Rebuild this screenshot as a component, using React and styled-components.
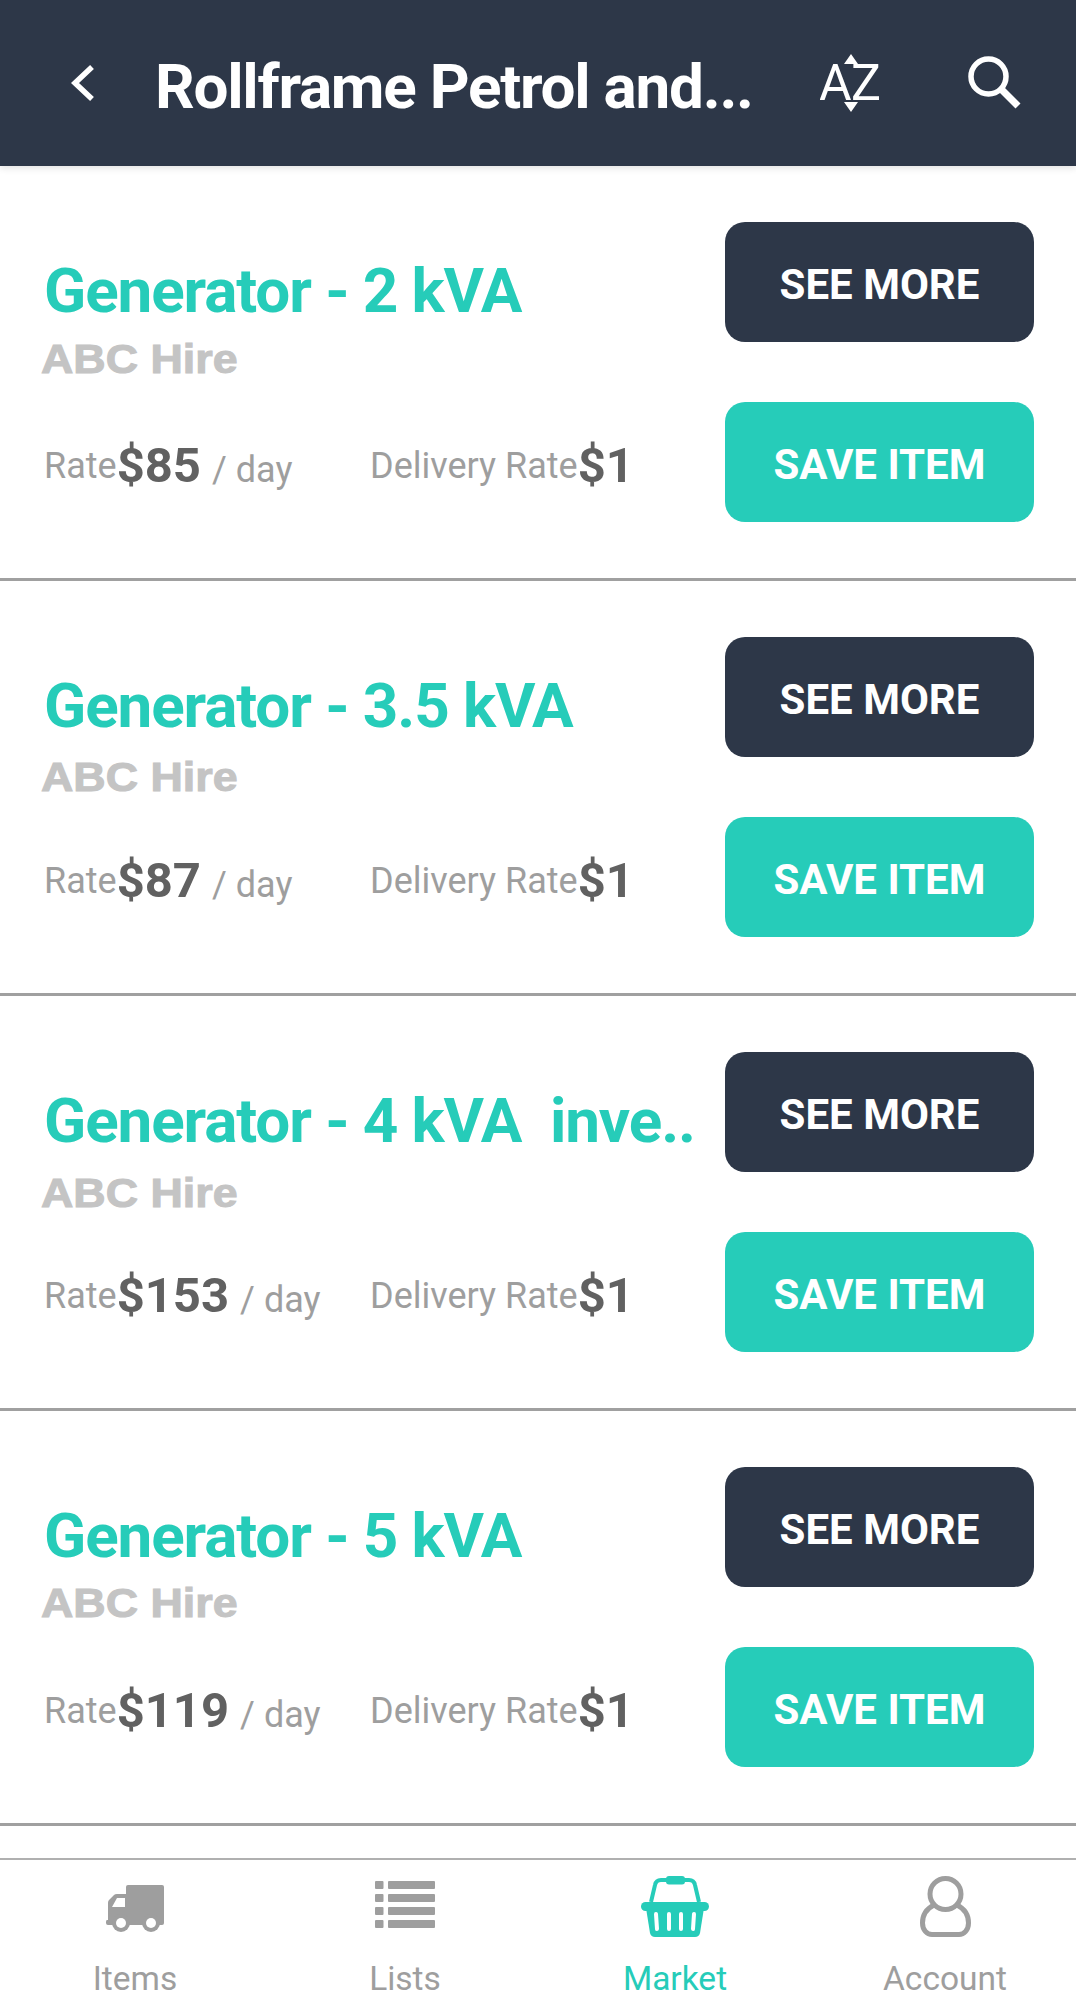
import React from "react";
import styled, { createGlobalStyle } from "styled-components";

const Global = createGlobalStyle`
  html, body { margin: 0; padding: 0; background: #fff; }
  * { box-sizing: border-box; }
`;
const Page = styled.div`
  width: 1076px; height: 1994px; display: flex; flex-direction: column; overflow: hidden;
  background: #fff; font-family: Roboto, "Liberation Sans", sans-serif;
`;
const Header = styled.header`
  height: 166px; flex: none; background: #2d3748; display: flex; align-items: center;
  box-shadow: 0 2px 7px rgba(0,0,0,.12); position: relative; z-index: 1;
`;
const BackBtn = styled.div`width: 155px; height: 166px; flex: none; display: flex; align-items: center; padding-left: 71px;`;
const HeaderTitle = styled.h1`
  margin: 0; width: 665px; height: 166px; flex: none; font-size: 62px; line-height: 173px; font-weight: 700; color: #fff;
  white-space: nowrap; letter-spacing: -1.25px;
`;
const HeaderIcon = styled.div`flex: none; display: flex; align-items: center; margin-left: ${p => p.$ml}px;`;
const List = styled.main`flex: 1; min-height: 0; overflow: hidden;`;
const Card = styled.article`
  height: 415px; border-bottom: 3px solid #a0a0a0; padding: 56px 42px 56px 44px; display: flex;
`;
const Left = styled.div`flex: 1; min-width: 0; display: flex; flex-direction: column;`;
const Title = styled.div`
  font-size: 62px; line-height: 70px; height: 70px; margin-top: 34px; font-weight: 700; color: #26ccb9; white-space: pre; letter-spacing: -1.1px;
`;
const Vendor = styled.div`
  font-family: "Liberation Sans", Arial, sans-serif; font-size: 40px; line-height: 46px; height: 46px;
  margin: ${p => 10 + p.$shift}px 0 ${p => -p.$shift}px -3px;
  font-weight: 700; color: #c4c4c4; -webkit-text-stroke: 1px #c4c4c4; transform: scaleX(1.12); transform-origin: left center;
`;
const Rates = styled.div`display: flex; margin-top: 54px; white-space: nowrap;`;
const RateCol = styled.div`width: 326px; flex: none; line-height: 60px;`;
const Label = styled.span`font-size: 36px; color: #9e9e9e; vertical-align: 4px;`;
const Price = styled.span`font-size: 49px; font-weight: 700; color: #616161;`;
const Unit = styled.span`font-size: 36px; color: #9e9e9e; margin-left: 11px;`;
const Right = styled.div`width: 309px; flex: none; display: flex; flex-direction: column; gap: 60px;`;
const Btn = styled.button`
  width: 309px; height: 120px; border: 0; border-radius: 20px; padding: 5px 0 0;
  background: ${p => p.$teal ? "#26ccb9" : "#2d3748"}; color: #fff;
  font-family: Roboto, sans-serif; font-size: 42px; font-weight: 700;
`;
const Nav = styled.nav`
  height: 136px; flex: none; border-top: 2px solid #b0b0b0; display: grid; grid-template-columns: repeat(4, 270px); background: #fff;
`;
const Tab = styled.div`
  display: flex; flex-direction: column; align-items: center; color: ${p => p.$active ? "#26ccb9" : "#9e9e9e"};
`;
const TabIcon = styled.div`height: 104px; padding-top: ${p => p.$pt}px; display: flex; justify-content: center;`;
const TabLabel = styled.div`font-size: 33.5px; line-height: 30px; height: 30px; white-space: nowrap;`;

const Back = () => <svg width="24" height="38" viewBox="0 0 24 38" fill="none"><path d="M21 3 L4 19 L21 35" stroke="#fff" strokeWidth="5.5"/></svg>;
const AZ = () => (
  <svg width="64" height="58" viewBox="0 0 64 58">
    <path d="M31 0 L38 10 H24 Z M31 58 L38 48 H24 Z" fill="#fff"/>
    <text x="-1" y="46" fontFamily="Roboto, sans-serif" fontWeight="400" fontSize="50" fill="#fff">A</text>
    <text x="31" y="46" fontFamily="Roboto, sans-serif" fontWeight="400" fontSize="50" fill="#fff">Z</text>
  </svg>
);
const Search = () => (
  <svg width="54" height="54" viewBox="0 0 54 54" fill="none">
    <circle cx="20.500" cy="20.500" r="17.5" stroke="#fff" strokeWidth="5.5"/>
    <path d="M33 33 L50 50" stroke="#fff" strokeWidth="7"/>
  </svg>
);
const Truck = () => (
  <svg width="58" height="47" viewBox="0 0 58 47" fill="#9e9e9e">
    <path d="M20 2 Q20 0 22 0 H56 Q58 0 58 2 V38 Q58 40 56 40 H20 Z"/>
    <path fillRule="evenodd" d="M21 9 H11 Q9 9 8 10 L3 15 Q2 16 2 18 V35 H1 Q0 35 0 37 V38 Q0 40 2 40 H21 Z M19 13 H11 L6 22 H19 Z"/>
    <circle cx="15" cy="38" r="9"/><circle cx="45" cy="38" r="9"/>
    <circle cx="15" cy="38" r="5" fill="#fff"/><circle cx="45" cy="38" r="5" fill="#fff"/>
  </svg>
);
const Lists = () => (
  <svg width="60" height="47" viewBox="0 0 60 47" fill="#9e9e9e">
    {[0, 13, 26, 39].map(y => (
      <g key={y}>
        <rect x="0" y={y} width="8.5" height="8" rx="1"/>
        <rect x="13" y={y} width="47" height="8" rx="1"/>
      </g>
    ))}
  </svg>
);
const Basket = () => (
  <svg width="68" height="61" viewBox="0 0 68 61" fill="#26ccb9">
    <path d="M10 26 L14 9 Q15 4 20 4 H48 Q53 4 54 9 L58 26" fill="none" stroke="#26ccb9" strokeWidth="4"/>
    <rect x="25" y="0" width="19" height="8.5" rx="3"/>
    <rect x="0" y="26" width="68" height="9" rx="4.5"/>
    <path d="M5 32 H63 L59 57 Q58 61 54 61 H14 Q10 61 9 57 Z"/>
    <path d="M15 38 L16 53 M28 38 V53 M40 38 V53 M53 38 L52 53" stroke="#fff" strokeWidth="4" strokeLinecap="round"/>
  </svg>
);
const Person = () => (
  <svg width="51" height="61" viewBox="0 0 51 61" fill="none" stroke="#9e9e9e" strokeWidth="5">
    <circle cx="25.5" cy="18" r="15.5"/>
    <path d="M14 29 C6 33 2.5 40 2.5 47 C2.5 54 7 58.5 12 58.5 H39 C44 58.5 48.500 54 48.500 47 C48.500 40 45 33 37 29"/>
  </svg>
);

const items = [
  { t: "Generator - 2 kVA", p: "$85", s: 0 },
  { t: "Generator - 3.5 kVA", p: "$87", s: 3 },
  { t: "Generator - 4 kVA  inve..", p: "$153", s: 4 },
  { t: "Generator - 5 kVA", p: "$119", s: -1 },
];
const tabs = [
  { l: "Items", I: Truck, pt: 25 },
  { l: "Lists", I: Lists, pt: 21 },
  { l: "Market", I: Basket, pt: 16, a: true },
  { l: "Account", I: Person, pt: 16 },
];

export default function App() {
  return (
    <Page>
      <Global />
      <Header>
        <BackBtn><Back /></BackBtn>
        <HeaderTitle>Rollframe Petrol and...</HeaderTitle>
        <HeaderIcon $ml="0"><AZ /></HeaderIcon>
        <HeaderIcon $ml="84"><Search /></HeaderIcon>
      </Header>
      <List>
        {items.map(it => (
          <Card key={it.t}>
            <Left>
              <Title>{it.t}</Title>
              <Vendor $shift={it.s}>ABC Hire</Vendor>
              <Rates>
                <RateCol><Label>Rate</Label><Price>{it.p}</Price><Unit>/ day</Unit></RateCol>
                <RateCol><Label>Delivery Rate</Label><Price>$1</Price></RateCol>
              </Rates>
            </Left>
            <Right>
              <Btn>SEE MORE</Btn>
              <Btn $teal>SAVE ITEM</Btn>
            </Right>
          </Card>
        ))}
      </List>
      <Nav>
        {tabs.map(({ l, I, pt, a }) => (
          <Tab key={l} $active={a}>
            <TabIcon $pt={pt}><I /></TabIcon>
            <TabLabel>{l}</TabLabel>
          </Tab>
        ))}
      </Nav>
    </Page>
  );
}
